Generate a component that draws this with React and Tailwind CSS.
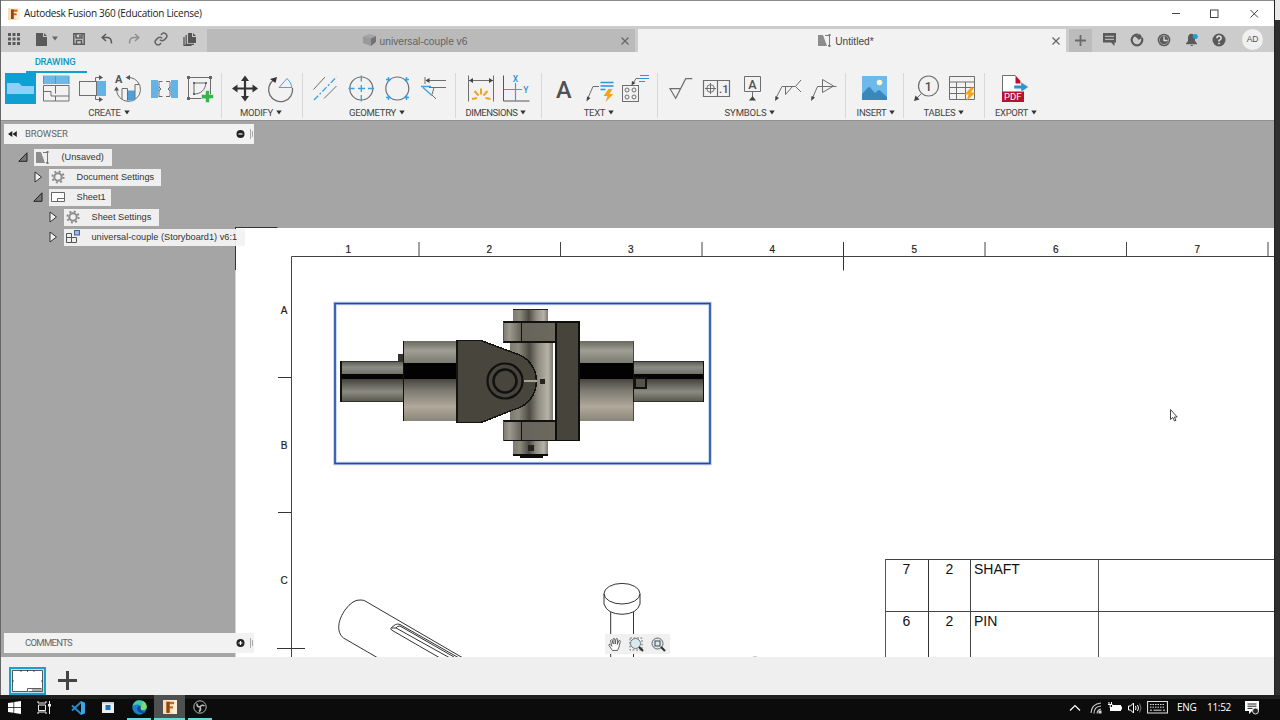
import React from "react";

/* ---------- ribbon icons, each drawn on a 36x32 tile ---------- */

const Tile = ({ children }) => (
  <svg
    width="36"
    height="32"
    viewBox="0 0 36 32"
    fill="none"
    stroke="#6e6e6e"
    strokeWidth="1"
    className="shrink-0"
  >
    {children}
  </svg>
);

const BaseViewIcon = () => (
  <Tile>
    <rect x="2" y="0" width="31" height="31" fill="#109fd3" stroke="none" />
    <path d="M4 10h12l3 3h12v8H4z" fill="#8fd0fa" stroke="none" />
  </Tile>
);

const ProjectedViewIcon = () => (
  <Tile>
    <path d="M4 2.500h26v8.500H4z" fill="#6fb7e6" stroke="none" />
    <path d="M4.500 3v8M16.500 3v8M30 3v8" stroke="#4f97c8" />
    <path d="M4.500 28V12.500h12v8M16.500 12.500h13.500V28H4.500M4.500 18.500h7.500v4.500h18M16.500 23v5" />
  </Tile>
);

const SectionViewIcon = () => (
  <Tile>
    <rect x="4.500" y="8.500" width="17" height="14" />
    <rect x="22" y="8" width="9" height="15" fill="#64b3e6" stroke="none" />
    <path d="M20.500 8V4.500h5M20.500 23v3.500h5" />
    <path d="M24 2l4 2.500-4 2.500zM24 24l4 2.500-4 2.500z" fill="#555" stroke="none" />
  </Tile>
);

const DetailViewIcon = () => (
  <Tile>
    <path d="M17 4.500h2a12 12 0 1 1-13.500 12" />
    <path d="M19 2l-4.500 2.500L19 7zM3 17.500l2.500-4 2.500 4z" fill="#555" stroke="none" />
    <rect x="16.500" y="17.500" width="7.500" height="10" fill="#4f9fd8" stroke="none" />
    <path d="M11 26V15.500h5.500v12M24 26V11.500h4" />
    <text x="4" y="10" fontSize="11" fontWeight="700" fontFamily="Roboto" fill="#555" stroke="none">
      A
    </text>
  </Tile>
);

const BreakViewIcon = () => (
  <Tile>
    <path d="M4 7h7v6l2 3-2 3v6H4zM31 7h-7v6l-2 3 2 3v6h7z" fill="#64b3e6" stroke="none" />
    <path d="M11.500 8.500h4M19 8.500h4M11.500 23.500h4M19 23.500h4" />
    <path d="M12 9v5l2 2-2 2v5M23 9v5l-2 2 2 2v5" />
  </Tile>
);

const SketchIcon = () => (
  <Tile>
    <rect x="5.500" y="4.500" width="22" height="21" />
    <path d="M11 10h12M11 10v11M23 10c-1 7-5 11-12 11" stroke="#666" />
    <path
      d="M4 3h3v3H4zM26 3h3v3h-3zM4 24h3v3H4zM10 9h2v2h-2zM22 9h2v2h-2zM10 20h2v2h-2z"
      fill="#666"
      stroke="none"
    />
    <path d="M22.500 17.500h4v4h4v4h-4v4h-4v-4h-4v-4h4z" fill="#34b44a" stroke="#f2f2f2" strokeWidth=".6" />
  </Tile>
);

const MoveIcon = () => (
  <Tile>
    <path d="M18 5v21M8 15.500h20" stroke="#333" strokeWidth="2.200" />
    <path
      d="M18 2.500l4 5.500h-8zM18 28.500l4-5.500h-8zM5 15.500l5.500-4v8zM31 15.500l-5.500-4v8z"
      fill="#333"
      stroke="none"
    />
  </Tile>
);

const RotateIcon = () => (
  <Tile>
    <path d="M10.500 7a12 12 0 1 0 19 8" strokeWidth="1.300" />
    <path d="M7 6l7-2-1.500 6z" fill="#333" stroke="none" />
    <path d="M16 14.500L24 5.500q4.500 4 5 9z" stroke="#4aa3df" />
  </Tile>
);

const CenterlineIcon = () => (
  <Tile>
    <path d="M6.500 16.500L18 4M17 25.500L29.500 13" />
    <path d="M7 27L29.500 4" stroke="#3f9edb" strokeWidth="1.300" strokeDasharray="6 2 2 2" />
  </Tile>
);

const CenterMarkIcon = () => (
  <Tile>
    <circle cx="18.300" cy="15.500" r="11.500" strokeWidth="1.200" />
    <path
      d="M18.300 2.500v6M18.300 12v7M18.300 22v6.500M5.500 15.500h6M15 15.500h7M25 15.500h6"
      stroke="#3f9edb"
      strokeWidth="1.300"
    />
  </Tile>
);

const CenterPatternIcon = () => (
  <Tile>
    <circle cx="18.300" cy="15.500" r="11.500" strokeWidth="1.200" />
    <path
      d="M7 6.500h5M9.500 4v5M25 6.500h5M27.500 4v5M7 24.500h5M9.500 22v5M25 24.500h5M27.500 22v5"
      stroke="#3f9edb"
      strokeWidth="1.400"
    />
  </Tile>
);

const EdgeExtensionIcon = () => (
  <Tile>
    <path d="M10 4v7M11 7.500h20M14 14.500h17M17 22l4 4M19 14.500l-2 7" />
    <path d="M10.500 7.500l4-2.500v5z" fill="#444" stroke="none" />
    <path d="M6 13.500h10M8 14.500l9 8" stroke="#3f9edb" strokeWidth="1.300" />
  </Tile>
);

const DimensionIcon = () => (
  <Tile>
    <path d="M5.500 2.500v26M30.500 2.500v26M6 7.500h24" />
    <path d="M6 7.500l4-2.500v5zM30 7.500L26 5v5z" fill="#444" stroke="none" />
    <path
      d="M9 26l5-1M11.500 18l4 4.500M18 15.500v6M24.500 18l-4 4.500M27.500 26l-5-1"
      stroke="#f2a41f"
      strokeWidth="2"
    />
  </Tile>
);

const OrdinateIcon = () => (
  <Tile>
    <path d="M4.500 2.500V28h26" stroke="#555" />
    <path d="M16.500 10v18M5 16.500h18" stroke="#3f9edb" strokeWidth="1.200" />
    <g fontSize="8.500" fontFamily="Roboto" fontWeight="500" fill="#2b93d6" stroke="none">
      <text x="13.700" y="8.500">X</text>
      <text x="24.200" y="19.500">Y</text>
    </g>
  </Tile>
);

const TextIcon = () => (
  <Tile>
    <text
      x="17.700"
      y="24.500"
      textAnchor="middle"
      fontSize="23.500"
      fontFamily="Roboto"
      fontWeight="500"
      fill="#505050"
      stroke="none"
    >
      A
    </text>
  </Tile>
);

const Bolt = ({ d }) => <path d={d} fill="#f2a41f" stroke="none" />;

const LeaderIcon = () => (
  <Tile>
    <path d="M5.500 26L11 13.500h6" />
    <path d="M4.500 28.500l.5-5 3.500 1.500z" fill="#444" stroke="none" />
    <path d="M18.500 9.500h13M18.500 13h13M18.500 16.500h5" stroke="#2b93d6" strokeWidth="1.600" />
    <Bolt d="M26.500 16l-5 7h4l-2 6 8-8h-4l3-5z" />
  </Tile>
);

const HoleNoteIcon = () => (
  <Tile>
    <rect x="4.500" y="12.500" width="16" height="16" />
    <circle cx="9" cy="17" r="2" />
    <circle cx="16" cy="17" r="2" />
    <circle cx="9" cy="24" r="2" />
    <circle cx="16" cy="24" r="2" />
    <path d="M15 10.500l3-5h3" />
    <path d="M13.500 12.500l.5-4.500 3.500 2z" fill="#444" stroke="none" />
    <path d="M22 2.500h9M21 5.500h10M21 8.500h6" stroke="#2b93d6" strokeWidth="1.200" />
  </Tile>
);

const SurfaceIcon = () => (
  <Tile>
    <path d="M19 15.700H8l5.700 9.600 10-19.600h6.600" strokeWidth="1.200" />
  </Tile>
);

const FeatureFrameIcon = () => (
  <Tile>
    <path d="M5.500 7.500h26v16h-26zM19.500 7.500v16" strokeWidth="1.200" />
    <circle cx="12.500" cy="15.500" r="3.800" />
    <path d="M12.500 10v11M7 15.500h11" />
    <text x="21" y="20" fontSize="11.500" fontFamily="Roboto" fontWeight="500" fill="#555" stroke="none">.1</text>
  </Tile>
);

const DatumIcon = () => (
  <Tile>
    <path d="M10.500 3.500h16v15h-16zM18.500 18.500v6" />
    <path d="M18.500 23l3.500 4.500h-7z" fill="#444" stroke="none" />
    <text
      x="18.500"
      y="15.500"
      textAnchor="middle"
      fontSize="12.500"
      fontFamily="Roboto"
      fontWeight="500"
      fill="#505050"
      stroke="none"
    >
      A
    </text>
  </Tile>
);

const WeldIcon = () => (
  <Tile>
    <path d="M6 25l6-11.500h13.500M15.500 13.500v8l7-8M31 7l-5.500 6.500L31 19" />
    <path d="M5 28l.5-5 3.500 2z" fill="#444" stroke="none" />
  </Tile>
);

const TaperIcon = () => (
  <Tile>
    <path d="M6.500 25l5-11.500h19M16.500 6.500v13l11-6.500z" />
    <path d="M5 28l.5-5 3.500 1.500z" fill="#444" stroke="none" />
  </Tile>
);

const ImageIcon = () => (
  <Tile>
    <rect x="6" y="3" width="25" height="24" fill="#6cb9ea" stroke="none" />
    <path d="M6 21l6-6.500q1-1 2 0l5 5.500 3-2.500q1-1 2 0l7 6.500v3H6z" fill="#3987bb" stroke="none" />
    <circle cx="23.500" cy="9.500" r="2.800" fill="#fbf7cf" stroke="none" />
  </Tile>
);

const BalloonIcon = () => (
  <Tile>
    <circle cx="20.500" cy="13" r="10" strokeWidth="1.200" />
    <path d="M13 21l-4 4" />
    <path d="M6 28l1.500-5.500 4 4z" fill="#444" stroke="none" />
    <text
      x="20.300"
      y="17.500"
      textAnchor="middle"
      fontSize="12.500"
      fontFamily="Roboto"
      fontWeight="500"
      fill="#505050"
      stroke="none"
    >
      1
    </text>
  </Tile>
);

const TableIcon = () => (
  <Tile>
    <path d="M5.500 3.500h25v23h-25zM5.500 9h25M5.500 14.500h25M5.500 20.500h25M12.500 9v17.500M21.500 9v17.500" />
    <Bolt d="M27 14.500l-6.500 7h4l-2 6.500 9-8.500h-4.500l3-5z" />
  </Tile>
);

const PdfIcon = () => (
  <Tile>
    <path d="M5.500 19V2.500h13" fill="#fff" />
    <path d="M6 3h13v16H6z" fill="#fff" stroke="none" />
    <path d="M18.500 2.500v8h5v-2.500z" fill="#b5122b" stroke="none" />
    <rect x="5" y="18.500" width="22" height="10.500" fill="#b5122b" stroke="none" />
    <path d="M17 12.300h7V9l7.500 5-7.500 5v-3.300h-7z" fill="#2f92d2" stroke="#f2f2f2" strokeWidth=".4" />
    <text x="7" y="27.300" fontSize="9.500" fontFamily="Roboto" fill="#fff" stroke="none">PDF</text>
  </Tile>
);

const groups = [
  { name: "CREATE", box: "w-[222px] pl-px", label: "-ml-1", icons: [BaseViewIcon, ProjectedViewIcon, SectionViewIcon, DetailViewIcon, BreakViewIcon, SketchIcon] },
  { name: "MODIFY", box: "w-[81px] pl-0.5", label: "-ml-1", icons: [MoveIcon, RotateIcon] },
  { name: "GEOMETRY", box: "w-[153px]", label: "-ml-1", icons: [CenterlineIcon, CenterMarkIcon, CenterPatternIcon, EdgeExtensionIcon] },
  { name: "DIMENSIONS", box: "w-[86px] pl-px", label: "-ml-1.5 tracking-[-0.45px]", icons: [DimensionIcon, OrdinateIcon] },
  { name: "TEXT", box: "w-[116px] pl-px", label: "-ml-0.5", icons: [TextIcon, LeaderIcon, HoleNoteIcon] },
  { name: "SYMBOLS", box: "w-[188px] pl-px", label: "-ml-1 tracking-[-0.15px]", icons: [SurfaceIcon, FeatureFrameIcon, DatumIcon, WeldIcon, TaperIcon] },
  { name: "INSERT", box: "w-[58px] pr-px", label: "ml-1", icons: [ImageIcon] },
  { name: "TABLES", box: "w-[81px]", label: "", icons: [BalloonIcon, TableIcon] },
  { name: "EXPORT", box: "w-[60px] border-r-0", label: "ml-0.5", icons: [PdfIcon] },
];

const Caret = () => (
  <svg width="6" height="5" viewBox="0 0 6 5" className="shrink-0 mb-px">
    <path d="M.3.500h5.400L3 4.500z" fill="#333" />
  </svg>
);

/* ---------- title and tab bar ---------- */

const FusionLogo = ({ size }) => (
  <svg width={size} height={size} viewBox="0 0 12 12">
    <path d="M0 0h12v12H0z" fill="#fbdcb8" />
    <path d="M3 0h9v12H9z" fill="#fdeedb" />
    <path d="M3 1.500h6.500v2.200H5.600v1.600h3v2h-3V11H3z" fill="#c96a1c" />
    <path d="M3 1.500h2.600V11H3z" fill="#8d4512" />
  </svg>
);

const TitleBar = () => (
  <div className="h-[26px] shrink-0 bg-white border-t border-[#8a8a8a] flex items-center pl-2">
    <FusionLogo size={12} />
    <span className="ml-1 font-['Open_Sans'] text-[10px] tracking-[-0.29px] text-[#222] whitespace-nowrap">
      Autodesk Fusion 360 (Education License)
    </span>
    <svg width="89" height="12" viewBox="0 0 89 12" className="ml-auto mr-[14px]" fill="none" stroke="#444">
      <path d="M1 5.500h8M79.500 2l7.500 7.500M87 2l-7.500 7.500" />
      <rect x="39.500" y="2" width="7.500" height="7.500" />
    </svg>
  </div>
);

const DrawingDoc = () => (
  <svg width="13" height="13" viewBox="0 0 13 13" fill="none" stroke="#777">
    <path d="M0 1h5l4 11H0z" fill="#8c8c8c" stroke="none" />
    <path d="M7 1.500h4.500v10H10" />
    <path d="M10.500 0h2v2h-2zM10.500 11h2v2h-2z" fill="#777" stroke="none" />
  </svg>
);

const Close = () => (
  <svg width="8" height="8" viewBox="0 0 8 8" stroke="#666" strokeWidth="1.300">
    <path d="M.5.5l7 7M7.500.5l-7 7" />
  </svg>
);

const TabBar = () => (
  <div className="h-[26px] shrink-0 bg-[#cccccc] flex items-center text-[#5f5f5f]">
    <div className="w-7 flex justify-center">
      <svg width="12" height="12" viewBox="0 0 12 12" fill="#5a5a5a">
        <path d="M0 0h3v3H0zM4.500 0h3v3h-3zM9 0h3v3H9zM0 4.500h3v3H0zM4.500 4.500h3v3h-3zM9 4.500h3v3H9zM0 9h3v3H0zM4.500 9h3v3h-3zM9 9h3v3H9z" />
      </svg>
    </div>
    <div className="w-[37px] flex items-center justify-center gap-[5px]">
      <svg width="11" height="13" viewBox="0 0 11 13" fill="#5a5a5a">
        <path d="M0 0h7v4h4v9H0zM8 0l3 3H8z" />
      </svg>
      <svg width="6" height="5" viewBox="0 0 6 5" className="mb-0.5">
        <path d="M0 .5h6L3 4.500z" fill="#666" />
      </svg>
    </div>
    <div className="w-7 flex justify-center">
      <svg width="12" height="12" viewBox="0 0 12 12" fill="none" stroke="#5a5a5a" strokeWidth="1.500">
        <path d="M.8.8h10.400v10.400H.8zM3 1v4h6V1M3.500 11V7.500h5V11M7 2v2" />
      </svg>
    </div>
    <div className="w-[27px] flex justify-center">
      <svg width="12" height="12" viewBox="0 0 12 12" fill="none" stroke="#5a5a5a" strokeWidth="1.500">
        <path d="M5 1L1.200 4.500 5 8M1.500 4.500H7q3.500.5 3.500 6" />
      </svg>
    </div>
    <div className="w-[27px] flex justify-center">
      <svg width="12" height="12" viewBox="0 0 12 12" fill="none" stroke="#8e8e8e" strokeWidth="1.400">
        <path d="M7 1l3.800 3.500L7 8M10.500 4.500H5Q1.500 5 1.500 10.500" />
      </svg>
    </div>
    <div className="w-7 flex justify-center">
      <svg width="14" height="14" viewBox="0 0 24 24" fill="none" stroke="#666" strokeWidth="2.600">
        <path d="M10 13a5 5 0 0 0 7.540.54l3-3a5 5 0 0 0-7.070-7.070l-1.720 1.710" />
        <path d="M14 11a5 5 0 0 0-7.540-.54l-3 3a5 5 0 0 0 7.070 7.070l1.710-1.710" />
      </svg>
    </div>
    <div className="w-7 flex justify-center">
      <svg width="13" height="13" viewBox="0 0 13 13" fill="#555">
        <path d="M5 0h4v4h4v6H5zM10 0l3 3h-3z" />
        <path d="M3.200 2v9.300H11M1 4v8.500h7.500" fill="none" stroke="#555" strokeWidth="1.300" />
      </svg>
    </div>

    <div className="ml-1 mt-[3px] w-[428px] h-[23px] bg-[#bababa] flex items-center">
      <div className="flex-1 flex items-center justify-center gap-1 pl-2">
        <svg width="13" height="12" viewBox="0 0 13 12">
          <path d="M0 2.500L7 0l6 2-5 2.500z" fill="#a3a3a3" />
          <path d="M0 2.500l8 2V12L0 9z" fill="#999" />
          <path d="M13 2L8 4.500V12l5-4z" fill="#737373" />
        </svg>
        <span className="pt-0.5 font-['Liberation_Sans'] text-[10.2px] text-[#636363]">universal-couple v6</span>
      </div>
      <div className="w-5 flex justify-center"><Close /></div>
    </div>
    <div className="ml-[3px] mt-[3px] w-[428px] h-[23px] bg-[#f2f2f2] flex items-center">
      <div className="flex-1 flex items-center justify-center gap-1 pl-2">
        <DrawingDoc />
        <span className="pt-0.5 font-['Liberation_Sans'] text-[10.2px] text-[#444]">Untitled*</span>
      </div>
      <div className="w-5 flex justify-center"><Close /></div>
    </div>
    <div className="ml-[3px] mt-[3px] w-[23px] h-[23px] bg-[#bcbcbc] flex items-center justify-center">
      <svg width="11" height="11" viewBox="0 0 11 11" stroke="#6a6a6a" strokeWidth="1.800">
        <path d="M5.500 0v11M0 5.500h11" />
      </svg>
    </div>
    <div className="flex-1 flex items-center pl-2 pt-px">
      <svg width="13" height="13" viewBox="0 0 13 13" className="shrink-0 mr-[14px] ml-[3px]">
        <path d="M0 0h13v9.500h-1.500V13L8 9.500H0z" fill="#5a5a5a" />
        <path d="M2 3.300h9M2 6.300h9" stroke="#ccc" />
      </svg>
      <svg width="14" height="14" viewBox="0 0 14 14" className="shrink-0 mr-[13px]" fill="none">
        <circle cx="7" cy="7" r="5.300" stroke="#5a5a5a" strokeWidth="2.200" strokeDasharray="26 4" />
        <path d="M3 2l4 1 3-2 2 3-3 3-2-2z" fill="#5a5a5a" />
      </svg>
      <svg width="14" height="14" viewBox="0 0 14 14" className="shrink-0 mr-[14px]" fill="none">
        <circle cx="7" cy="7" r="6.300" fill="#5a5a5a" />
        <circle cx="7" cy="7" r="4.600" stroke="#aaa" strokeWidth=".8" />
        <path d="M7 3.500V7.500h3.500" stroke="#ddd" strokeWidth="1.300" />
      </svg>
      <svg width="14" height="14" viewBox="0 0 14 14" className="shrink-0 mr-[13px]">
        <path d="M6 .8q4 .2 4 4.200v3l2 2.500v.7H1v-.7L3 8V5Q3 1.500 6 .8zM5 12h3.500q-1.700 2-3.500 0z" fill="#5a5a5a" />
        <circle cx="10.300" cy="3.500" r="2.500" fill="#1c9fd6" />
      </svg>
      <svg width="14" height="14" viewBox="0 0 14 14" className="shrink-0 mr-4">
        <circle cx="7" cy="7" r="6.500" fill="#5a5a5a" />
        <path d="M4.800 5.300Q5 3 7 3t2.200 2Q9.200 6.500 7 7.500V8.500" fill="none" stroke="#e4e4e4" strokeWidth="1.500" />
        <path d="M6.200 9.700h1.700v1.600H6.200z" fill="#e4e4e4" />
      </svg>
      <div className="size-[21px] shrink-0 rounded-full bg-[#f0f0f0] flex items-center justify-center font-['Liberation_Sans'] text-[8.5px] tracking-tight text-[#555]">
        AD
      </div>
    </div>
  </div>
);

const Ribbon = () => (
  <div className="h-[69px] shrink-0 bg-[#f2f2f2] border-b border-[#8f8f8f] flex flex-col">
    <div className="ml-[26px] w-[61px] h-[21px] shrink-0 border-b-2 border-[#109fd3] flex items-center justify-center pr-[3px] pt-0.5 font-['Roboto'] font-medium text-[9.5px] tracking-[-0.25px] text-[#1594c6]">
      DRAWING
    </div>
    <div className="flex">
      {groups.map((g) => (
        <div key={g.name} className={`h-[45px] border-r border-[#d8d8d8] flex flex-col items-center ${g.box}`}>
          <div className="flex">
            {g.icons.map((Icon, i) => (
              <Icon key={i} />
            ))}
          </div>
          <div className={`flex items-center gap-[3px] font-['Roboto'] text-[9.5px] leading-[16px] tracking-[-0.3px] text-[#444] ${g.label}`}>
            {g.name}
            <Caret />
          </div>
        </div>
      ))}
    </div>
  </div>
);

/* ---------- browser tree ---------- */

const Gear = () => (
  <svg width="14" height="14" viewBox="0 0 14 14" fill="none" stroke="#8c8c8c">
    <circle cx="7" cy="7" r="3.700" strokeWidth="2" />
    <circle cx="7" cy="7" r="5.600" strokeWidth="2" strokeDasharray="2 2.400" />
  </svg>
);

const SheetIcon = () => (
  <svg width="14" height="12" viewBox="0 0 14 12" fill="#fff" stroke="#666">
    <path d="M.5 1.500h13v9H.5zM6.500 10.500v-3h7" />
  </svg>
);

const ViewsIcon = () => (
  <svg width="14" height="14" viewBox="0 0 14 14" fill="none" stroke="#555">
    <path d="M.5 3.500h5v4h-5zM.5 7.500h5v5h-5zM5.500 7.500h5v5h-5z" />
    <rect x="8.500" y=".5" width="5" height="4.500" fill="#9db8ea" stroke="#4a5f94" />
  </svg>
);

const rows = [
  { text: "(Unsaved)", open: true, Icon: DrawingDoc, pad: "pl-[17px]", pill: "w-[78px]" },
  { text: "Document Settings", Icon: Gear, pad: "pl-[32px]", pill: "w-[112px]" },
  { text: "Sheet1", open: true, Icon: SheetIcon, pad: "pl-[32px]", pill: "w-[62px]" },
  { text: "Sheet Settings", Icon: Gear, pad: "pl-[47px]", pill: "w-[95px]" },
  { text: "universal-couple (Storyboard1) v6:1", Icon: ViewsIcon, pad: "pl-[47px]", pill: "w-[181px]" },
];

const PanelHeader = ({ title, open, spacing }) => (
  <div className={`ml-1 w-[250px] h-[20px] bg-[#f2f2f2] flex items-center font-['Roboto'] text-[9.5px] text-[#666] ${spacing}`}>
    <div className="w-[21px] pl-1">
      {open && (
        <svg width="9" height="6" viewBox="0 0 9 6" fill="#222">
          <path d="M4.300 0v6L0 3zM8.800 0v6L4.500 3z" />
        </svg>
      )}
    </div>
    <span className="pt-px">{title}</span>
    <svg width="18" height="10" viewBox="0 0 18 10" className="ml-auto" fill="none">
      <circle cx="4.500" cy="5" r="4" fill="#222" />
      <path d={open ? "M2.500 5h4" : "M2.500 5h4M4.500 3v4"} stroke="#fff" strokeWidth="1.200" />
      <path d="M14.500 0v10M16.500 2v6" stroke="#aaa" />
    </svg>
  </div>
);

const BrowserPanel = () => (
  <div className="relative h-full flex flex-col pt-[3px] pb-1">
    <PanelHeader title="BROWSER" open spacing="tracking-[-0.15px]" />
    <div className="mt-[3px]">
      {rows.map((r) => (
        <div key={r.text} className={`h-5 flex items-center ${r.pad}`}>
          <div className="w-[17px] pl-px">
            {r.open ? (
              <svg width="10" height="10" viewBox="0 0 10 10">
                <path d="M9 .8V9.300H.8z" fill="#777" stroke="#222" />
              </svg>
            ) : (
              <svg width="9" height="12" viewBox="0 0 9 12" className="ml-px">
                <path d="M1 1l6.500 5L1 11z" fill="#f0f0f0" stroke="#333" />
              </svg>
            )}
          </div>
          <div className={`h-[17px] bg-[#f2f2f2]/95 flex items-center font-['Liberation_Sans'] text-[9.2px] text-[#333] whitespace-nowrap ${r.pill}`}>
            <div className="w-[27.5px] pl-0.5"><r.Icon /></div>
            <span className="pt-0.5">{r.text}</span>
          </div>
        </div>
      ))}
    </div>
    <div className="mt-auto">
      <PanelHeader title="COMMENTS" spacing="tracking-[-0.7px]" />
    </div>
  </div>
);

/* ---------- drawing sheet, in canvas coordinates (canvas starts at y=121) ---------- */

const zonesX = [348, 489, 630.5, 772, 914, 1055.5, 1197];
const ticksX = [419, 560.5, 702, 985, 1126.5, 1268];
const zonesY = [["A", 310], ["B", 445], ["C", 580.5]];

const Model = () => (
  <g shapeRendering="crispEdges">
    {/* left shaft and hub */}
    <rect x="341" y="361" width="62" height="41" fill="url(#rod)" />
    <path d="M341 361h62M341 401.500h62" stroke="#33332e" />
    <path d="M341 361v41" stroke="#111" strokeWidth="2" />
    <rect x="341" y="373.500" width="62" height="5" fill="#050505" />
    <path d="M397.500 354h5.500v8h-5.500z" fill="#34342f" />
    <rect x="403" y="341" width="54" height="80" fill="url(#hub)" />
    <rect x="403" y="363" width="54" height="15.500" fill="#020202" />
    <path d="M403.500 341v80" stroke="#111" strokeWidth="1.500" />
    {/* right hub and shaft */}
    <rect x="634" y="361" width="70" height="41" fill="url(#rod)" />
    <rect x="634" y="373.500" width="70" height="5" fill="#050505" />
    <path d="M634 361.500h70M634 401.500h70" stroke="#33332e" />
    <path d="M703.500 361v41" stroke="#111" strokeWidth="1.500" />
    <rect x="580" y="341" width="54" height="80" fill="url(#hub)" />
    <rect x="580" y="363" width="54" height="15.500" fill="#020202" />
    <path d="M633.500 341v80" stroke="#4b4b44" strokeWidth="1.500" />
    <path d="M633.500 361v41" stroke="#151513" strokeWidth="1.500" />
    <rect x="634.500" y="377.500" width="11" height="10" fill="#55544a" stroke="#111" strokeWidth="2" />
    {/* cross pin */}
    <rect x="510" y="342" width="43" height="79" fill="url(#pin)" />
    <rect x="513" y="309" width="35" height="13" fill="url(#pin)" />
    <path d="M513 309.500h35" stroke="#222" strokeWidth="1.500" />
    <rect x="513" y="441" width="35" height="14" fill="url(#pin)" />
    <path d="M513 455h35" stroke="#0c0c0c" strokeWidth="2.500" />
    <path d="M520 457h23" stroke="#0c0c0c" strokeWidth="2.500" />
    <rect x="528" y="445" width="6" height="6" fill="#26231f" />
    <rect x="540" y="379" width="5" height="5" fill="#26231f" />
    {/* yoke ears */}
    <rect x="503" y="322" width="54" height="20" fill="url(#ear)" />
    <rect x="503" y="421" width="54" height="20" fill="url(#ear)" />
    <path d="M503 322h54M503 342h54M521.500 322v20M503 421h54M503 440.500h54M521.500 421v20" stroke="#111" strokeWidth="1.500" />
    <path d="M503.500 322v20M503.500 421v20" stroke="#55534a" />
    <rect x="556" y="322" width="23" height="118.500" fill="#47453b" stroke="#0e0e0c" strokeWidth="1.500" />
    {/* fork */}
    <path
      d="M457 340.500h24L514 353A29 29 0 0 1 514 409.500L481 422.500H457z"
      fill="#48463c"
      stroke="#141411"
      strokeWidth="1.500"
    />
    <g shapeRendering="auto" fill="none" stroke="#111">
      <circle cx="505" cy="381" r="17.500" strokeWidth="2.200" />
      <circle cx="505" cy="381" r="11.500" strokeWidth="2.500" />
    </g>
    <path d="M524 381h13" stroke="#a8a498" strokeWidth="1.500" />
  </g>
);

const Sheet = () => (
  <svg className="absolute inset-0" width="1275" height="536" viewBox="0 121 1275 536" fill="none">
    <defs>
      <linearGradient id="hub" x1="0" y1="0" x2="0" y2="1">
        <stop offset="0" stopColor="#6a6960" />
        <stop offset=".12" stopColor="#a09f94" />
        <stop offset=".27" stopColor="#7c7b72" />
        <stop offset=".47" stopColor="#45443e" />
        <stop offset=".62" stopColor="#7d7a70" />
        <stop offset=".82" stopColor="#b0a99c" />
        <stop offset="1" stopColor="#8a8579" />
      </linearGradient>
      <linearGradient id="rod" x1="0" y1="0" x2="0" y2="1">
        <stop offset="0" stopColor="#55554f" />
        <stop offset=".15" stopColor="#8b8e86" />
        <stop offset=".3" stopColor="#74766e" />
        <stop offset=".45" stopColor="#45453f" />
        <stop offset=".75" stopColor="#8c8b82" />
        <stop offset="1" stopColor="#55544b" />
      </linearGradient>
      <linearGradient id="pin" x1="0" y1="0" x2="1" y2="0">
        <stop offset="0" stopColor="#7d7a70" />
        <stop offset=".2" stopColor="#8d8a80" />
        <stop offset=".45" stopColor="#4c4a42" />
        <stop offset=".65" stopColor="#8d8a80" />
        <stop offset=".88" stopColor="#b8b3a8" />
        <stop offset="1" stopColor="#7a776d" />
      </linearGradient>
      <linearGradient id="ear" x1="0" y1="0" x2="1" y2="0">
        <stop offset="0" stopColor="#7a776d" />
        <stop offset=".12" stopColor="#9d998e" />
        <stop offset=".33" stopColor="#66635a" />
        <stop offset="1" stopColor="#6c695f" />
      </linearGradient>
    </defs>

    <rect x="235.500" y="228" width="1040" height="430" fill="#fff" />
    <path d="M235 227.500h42.500M235.500 228v42" stroke="#333" />
    <path d="M291.500 657V256.500H1275" stroke="#444" />
    <path d={ticksX.map((x) => `M${x} 242v14`).join("")} stroke="#444" />
    <path d="M843.500 242v28.500M278 377.500h13M278 512.500h13M277 648.500h28" stroke="#333" />
    <g fontFamily="Liberation Sans" fontSize="10" fill="#222" stroke="#222" strokeWidth=".2" textAnchor="middle">
      {zonesX.map((x, i) => (
        <text key={x} x={x + 0.3} y="252.500">{i + 1}</text>
      ))}
      {zonesY.map(([t, y]) => (
        <text key={t} x="284" y={y + 3.600}>{t}</text>
      ))}
    </g>

    <rect x="335" y="303.500" width="375" height="160" stroke="#b9cdf2" strokeWidth="3.500" />
    <rect x="335" y="303.500" width="375" height="160" stroke="#234a9c" strokeWidth="1.600" />
    <Model />

    {/* isometric shaft and headed pin */}
    <g stroke="#333">
      <path d="M378 658L343.500 638C336 632 338 620 345 610Q353 599 361 600q3 0 5 1.500L463 658" />
      <path d="M440 658L391.500 630q-1.500-1 0-2.500l4-3q2-1 4.500 0L459 658M450 658L396 628q-2 0-4.500 0M396 628q1-2 4-2L454 657" />
      <ellipse cx="622" cy="593.700" rx="18" ry="10.300" fill="#fff" />
      <path d="M604 594v10q3 10 18 10.300Q637 614 640 604V594M610.700 612v45M633.500 612v45" />
      <path d="M752 657.500q3-1.500 6 0" stroke="#aaa" />
    </g>

    <path d="M1170.500 409.500v10l2.300-2 1.700 3.500 1.500-.8-1.600-3.200h2.800z" fill="#fff" stroke="#333" strokeWidth=".9" />
  </svg>
);

const parts = [
  ["7", "2", "SHAFT"],
  ["6", "2", "PIN"],
];

const PartsList = () => (
  <div className="absolute left-[885px] top-[438px] w-[390px] h-[98px] overflow-hidden border-l border-[#555] font-['Liberation_Sans'] text-[14px] leading-[18px] text-[#111]">
    {parts.map(([item, qty, part]) => (
      <div key={part} className="h-[52px] flex border-t border-[#444]">
        <div className="w-[43px] border-r border-[#333] text-center pr-px">{item}</div>
        <div className="w-[42px] border-r border-[#444] text-center">{qty}</div>
        <div className="w-[128px] border-r border-[#555] pl-[3px]">{part}</div>
      </div>
    ))}
  </div>
);

const NavBar = () => (
  <div className="absolute left-[605px] top-[513px] w-[65px] h-[20px] bg-[#f0f0f0] flex items-center justify-around pr-px">
    <svg width="14" height="15" viewBox="0 0 14 15" fill="#fff" stroke="#555" strokeWidth=".9">
      <path d="M4.500 13.500L1 8.500q-.5-1.500 1-1.200l1.800 2L2.500 3.500q.8-1.500 1.700 0l1 3.500L5 2q1-1.500 1.800 0L7.200 7l.8-5q1-1.200 1.700.2L9.300 7.500l1.500-3.800q1.300-.8 1.500.6L11 10l-1.500 3.500z" />
    </svg>
    <svg width="15" height="15" viewBox="0 0 15 15" fill="none">
      <path d="M1 1h12v12H1z" stroke="#777" strokeDasharray="2 1.500" />
      <circle cx="6.500" cy="6.500" r="5" fill="#d8eaee" stroke="#777" />
      <path d="M10 10l4 4" stroke="#333" strokeWidth="2.200" />
    </svg>
    <svg width="15" height="15" viewBox="0 0 15 15" fill="none">
      <circle cx="6.500" cy="6.500" r="5.500" fill="#d8eaee" stroke="#666" />
      <rect x="4" y="4" width="5" height="5" stroke="#444" />
      <path d="M10 10l4 4" stroke="#333" strokeWidth="2.200" />
    </svg>
  </div>
);

const SheetStrip = () => (
  <div className="h-[38px] shrink-0 bg-[#efefef] flex items-end pl-[9px]">
    <div className="w-[37px] h-[28px] border-2 border-[#1c9fcf] bg-[#bfe0ef] p-px">
      <svg width="31" height="22" viewBox="0 0 31 22" fill="#fff" stroke="#333" strokeWidth=".8">
        <path d="M.5.5h30v21H.5z" />
        <path d="M9 0v2M15.500 0v2M22 0v2M0 11h2M29 11h2M15.500 21.500v-3h14M20 20h10" />
      </svg>
    </div>
    <svg width="19" height="19" viewBox="0 0 19 19" className="ml-3 mb-[5px]" stroke="#444" strokeWidth="3">
      <path d="M9.500 0v19M0 9.500h19" />
    </svg>
  </div>
);

/* ---------- taskbar ---------- */

const Taskbar = () => (
  <div className="h-[25px] shrink-0 w-full bg-[#0d0c0c] shadow-[inset_0_4px_0_#1e201e] flex items-center text-white font-['Open_Sans']">
    <div className="w-[29px] flex justify-center">
      <svg width="13" height="13" viewBox="0 0 13 13" fill="#fff">
        <path d="M0 2l5.500-.8V6H0zM6.200 1L13 0v6H6.200zM0 6.800h5.500v5L0 11zM6.200 6.800H13V13l-6.800-1z" />
      </svg>
    </div>
    <div className="w-[30px] flex justify-center">
      <svg width="15" height="13" viewBox="0 0 15 13" fill="none" stroke="#eee">
        <path d="M1.500 4h7v5.500h-7zM1 0v2h8V0M1 13v-2h8v2M12.500 0v13" />
        <path d="M11 3h3v2.500h-3z" fill="#eee" stroke="none" />
      </svg>
    </div>
    <div className="w-[37px] flex justify-center">
      <svg width="14" height="14" viewBox="0 0 14 14" fill="none">
        <path d="M10.500.8L1 9.500M10.500 13.200L1 4.500" stroke="#2489ca" strokeWidth="2" />
        <path d="M10 0l4 1.800v10.400L10 14z" fill="#3ba4e8" />
      </svg>
    </div>
    <div className="w-[24px] flex justify-center">
      <svg width="12" height="11" viewBox="0 0 12 11">
        <path d="M0 0h12v11H0z" fill="#e9eef2" />
        <path d="M3.500 3h5v5h-5z" fill="#1674bd" />
        <path d="M0 0h12v1.500H0z" fill="#bfc7ce" />
      </svg>
    </div>
    <div className="w-[7px]" />
    <div className="w-[24px] h-full border-b-2 border-[#6fd6de] flex items-center justify-center pt-px">
      <svg width="15" height="15" viewBox="0 0 15 15">
        <circle cx="7.500" cy="7.500" r="7.200" fill="#1b7fcf" />
        <path d="M.5 6Q2 .3 7.500.3q6.500.3 7.200 6.200 0 3.500-4 3.500-2.500 0-2-1.700Q9.500 5 6 4.500 2 4.300.5 6z" fill="#45c8a5" />
        <path d="M11 1.200q3.500 2 3.700 5.800-.5 3-4 3-2.500 0-2-1.700z" fill="#7fdc6a" />
        <path d="M5 8q0 5 6 5.300l2.500-1.300q-4 0-5-3.500-.5-1.700.3-2.500Q5.500 5.500 5 8z" fill="#0d4f96" />
      </svg>
    </div>
    <div className="ml-[3px] w-[31px] h-full bg-[#505050] border-b-2 border-[#6fd6de] flex items-center justify-center pt-px">
      <FusionLogo size={14} />
    </div>
    <div className="ml-[3px] w-[24px] h-full border-b-2 border-[#6fd6de] flex items-center justify-center pt-px">
      <svg width="14" height="14" viewBox="0 0 14 14" fill="none" stroke="#bbb">
        <circle cx="7" cy="7" r="6.200" />
        <path d="M7 7Q3.500 7 4 3.500M7 7q2-3 4.500-1M7 7q1.500 3-1 4.500" strokeWidth="1.600" />
      </svg>
    </div>

    <div className="ml-auto mr-[21px] flex items-center">
      <svg width="12" height="8" viewBox="0 0 12 8" className="mr-[9px]" fill="none" stroke="#fff" strokeWidth="1.200">
        <path d="M1 6.500l5-5 5 5" />
      </svg>
      <svg width="12" height="12" viewBox="0 0 12 12" className="mr-[6px]" fill="none" stroke="#ccc" strokeWidth="1.100">
        <path d="M1 11Q1.500 2 11 1M4 11.500Q4 4.500 11 4M7 11.500Q7.500 7.500 11 7" />
        <path d="M9 9h2v2H9z" fill="#fff" />
      </svg>
      <svg width="14" height="11" viewBox="0 0 14 11" className="mr-[6px]">
        <path d="M4 3h9v1.500h1v3h-1V9H2V5h2z" fill="#fff" />
        <path d="M1 0v2M3.500 0v2M0 2.500h4.500M2.200 3v3" stroke="#fff" />
      </svg>
      <svg width="14" height="12" viewBox="0 0 14 12" className="mr-[5px]" fill="none" stroke="#fff">
        <path d="M.5 4h2l3-3v10l-3-3h-2zM7.500 4q1 2 0 4M9.500 3q2 3 0 6" />
        <path d="M11.500 1.500q3 4.500 0 9" stroke="#777" />
      </svg>
      <svg width="21" height="13" viewBox="0 0 21 13" className="mr-[9px]" fill="none" stroke="#ddd">
        <path d="M.5.5h20v11.500H.5z" strokeWidth="1.200" />
        <path d="M3 3.500h15M3 6.200h15" strokeDasharray="1.500 1" />
        <path d="M3 9.200h2M6.500 9.200h8M16 9.200h2" />
      </svg>
      <span className="w-[20px] text-[10px] tracking-[-0.3px]">ENG</span>
      <span className="ml-[10px] w-[24px] text-[10px] tracking-[-0.3px]">11:52</span>
      <svg width="14" height="14" viewBox="0 0 14 14" className="ml-[14px]">
        <path d="M0 0h14v10H7l-3 3v-3H0z" fill="#fff" />
        <path d="M2.500 3h9M2.500 5.200h9M2.500 7.400h5" stroke="#222" />
        <circle cx="10.500" cy="10" r="3" fill="#222" stroke="#ddd" />
      </svg>
    </div>
  </div>
);

const App = () => {
  return (
    <div className="w-[1280px] h-[720px] overflow-hidden flex flex-col bg-[#2f2f2f] select-none">
      <div className="flex-1 min-h-0 flex">
        <div className="relative w-[1274px] shrink-0 flex flex-col">
          <TitleBar />
          <TabBar />
          <Ribbon />
          <div className="relative h-[536px] bg-[#a5a5a5] overflow-hidden">
            <Sheet />
            <PartsList />
            <BrowserPanel />
            <NavBar />
          </div>
          <SheetStrip />
          <div className="absolute left-0 top-0 w-px h-full bg-[#666]" />
        </div>
        <div className="flex-1 border-l border-[#222]">
          <div className="h-5 bg-[#e8e8e8]" />
        </div>
      </div>
      <Taskbar />
    </div>
  );
};

export default App;
